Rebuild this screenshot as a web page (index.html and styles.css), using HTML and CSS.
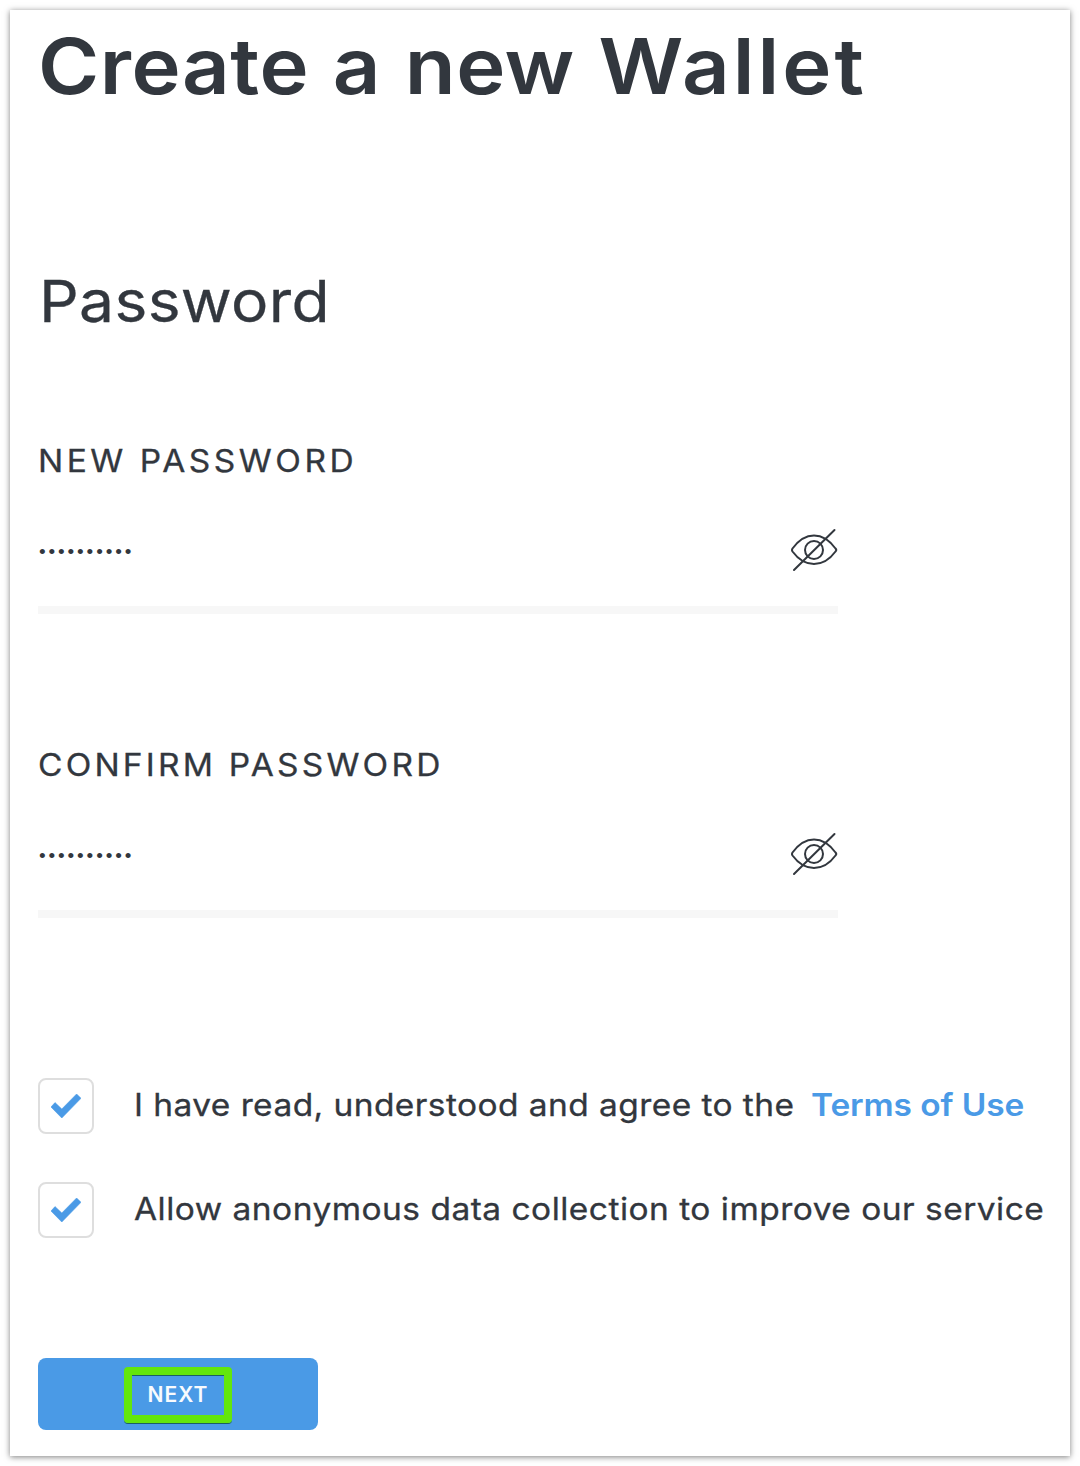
FILE: index.html
```html
<!DOCTYPE html>
<html lang="en">
<head>
<meta charset="utf-8">
<title>Create a new Wallet</title>
<link rel="stylesheet" href="styles.css">
</head>
<body>
<svg class="sprite" aria-hidden="true">
  <symbol id="eye-off" viewBox="0 0 48 44">
    <path d="M2.500 20.500C8 13 15 7.500 24 7.500s16 5.500 21.500 13Q47 22 45.500 23.500C40 31 33 36 24 36S8 31 2.500 23.500Q1.500 22 2.500 20.500Z"/>
    <circle cx="24" cy="22" r="9"/>
    <path d="M4 42 44.500 2"/>
  </symbol>
  <symbol id="check" viewBox="0 0 30 24">
    <path d="M0 13 4 8.600 10.800 15 25.600 0 30 4.300 10.800 24Z"/>
  </symbol>
</svg>
<main class="card">
  <h1 class="title">Create a new <span class="title-end">Wallet</span></h1>
  <h2 class="subtitle">Password</h2>
  <form class="form">
    <div class="field">
      <span class="label label-new">NEW PASSWORD</span>
      <div class="control">
        <span class="dots">••••••••••</span>
        <svg class="eye"><use href="#eye-off"/></svg>
      </div>
    </div>
    <div class="field">
      <span class="label label-confirm">CONFIRM PASSWORD</span>
      <div class="control">
        <span class="dots">••••••••••</span>
        <svg class="eye"><use href="#eye-off"/></svg>
      </div>
    </div>
    <div class="options">
      <div class="option">
        <span class="box"><svg class="check"><use href="#check"/></svg></span>
        <span class="option-text terms">I have read, understood and agree to the</span>
        <a class="link">Terms of Use</a>
      </div>
      <div class="option">
        <span class="box"><svg class="check"><use href="#check"/></svg></span>
        <span class="option-text">Allow anonymous data collection to improve our service</span>
      </div>
    </div>
    <button class="next" type="button"><span class="highlight">NEXT</span></button>
  </form>
</main>
</body>
</html>
```
FILE: styles.css
```css
* { box-sizing: border-box; }

body {
  margin: 0;
  padding: 10px;
  background: #fff;
  color: #32373e;
  font-family: Inter, "Open Sans", sans-serif;
}

.sprite { display: none; }

.card {
  height: 1446px;
  padding: 16px 0 0 28px;
  background: #fff;
  box-shadow: 0 1px 6px rgba(0, 0, 0, .5);
  white-space: nowrap;
}

/* Wide letterforms throughout */
.title, .subtitle, .label, .option-text, .link {
  transform: scaleX(1.08);
  transform-origin: left;
}

.title {
  width: 900px;
  margin: 0;
  font-size: 77px;
  font-weight: 600;
  line-height: 80px;
  letter-spacing: .500px;
  word-spacing: 2px;
}

.title-end { letter-spacing: 2.800px; }

.subtitle, .label, .option-text {
  -webkit-text-stroke: .3px currentColor;
}

.subtitle {
  width: 400px;
  margin: 165px 0 110px 1px;
  font-size: 57.700px;
  font-weight: 400;
  line-height: 60px;
  letter-spacing: .300px;
}

.field {
  width: 800px;
  margin-bottom: 131px;
}

.label {
  display: block;
  width: 500px;
  font-size: 31px;
  font-weight: 400;
  line-height: 40px;
}

.label-new { letter-spacing: 3.250px; }
.label-confirm { letter-spacing: 2.950px; }

.control {
  display: flex;
  align-items: center;
  justify-content: space-between;
  height: 133px;
  padding-top: 13px;
  border-bottom: 8px solid #f7f7f7;
}

.dots {
  padding: 3px 0 0 1px;
  font-family: "Liberation Sans", sans-serif;
  font-size: 19px;
  line-height: 24px;
  letter-spacing: 2.870px;
}

.eye {
  width: 48px;
  height: 44px;
  fill: none;
  stroke: #32373e;
  stroke-width: 2;
  stroke-linecap: round;
  stroke-linejoin: round;
}

.options {
  display: grid;
  gap: 48px;
  padding-top: 29px;
}

.option {
  display: flex;
  align-items: center;
  height: 56px;
  font-size: 31px;
  font-weight: 400;
  line-height: 54px;
}

.box {
  display: grid;
  place-items: center;
  width: 56px;
  height: 56px;
  margin-right: 40px;
  border: 2px solid #dedede;
  border-radius: 8px;
}

.check {
  width: 30px;
  height: 24px;
  fill: #4a9ae6;
  stroke: #4a9ae6;
  stroke-width: .6;
  overflow: visible;
}

.option-text {
  padding-bottom: 2px;
  letter-spacing: .450px;
}

.terms {
  width: 677px;
  letter-spacing: .400px;
}

.link {
  padding-bottom: 2px;
  color: #4a9ae6;
  font-weight: 600;
  letter-spacing: -.100px;
}

.next {
  display: grid;
  place-items: center;
  width: 280px;
  height: 72px;
  margin-top: 120px;
  padding: 2px 0 0;
  border: 0;
  border-radius: 8px;
  background: #4a9ae6;
  color: #f8fbfe;
  font: 600 21px Inter, sans-serif;
  letter-spacing: 1px;
}

.highlight {
  width: 108px;
  height: 56px;
  border: 8px solid #63e60c;
  border-radius: 4px;
  line-height: 40px;
  box-shadow: 0 1px 0 #1c5f63, inset 0 1px 0 #1c5f63;
}
```
